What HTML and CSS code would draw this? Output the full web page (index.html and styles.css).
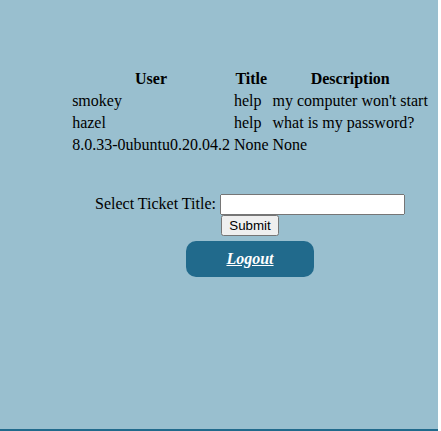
FILE: index.html
```html
<!DOCTYPE html>
<html>
<head>
<meta charset="utf-8">
<link rel="stylesheet" href="styles.css">
</head>
<body>
<div class="page">
  <div class="main">
    <table class="tickets">
      <tr><th>User</th><th>Title</th><th>Description</th></tr>
      <tr><td>smokey</td><td>help</td><td>my computer won't start</td></tr>
      <tr><td>hazel</td><td>help</td><td>what is my password?</td></tr>
      <tr><td>8.0.33-0ubuntu0.20.04.2</td><td>None</td><td>None</td></tr>
    </table>
    <form class="ticket-form">
      <label>Select Ticket Title:</label> <input type="text" class="field"><br>
      <input type="submit" value="Submit" class="submit">
    </form>
    <a href="#" class="logout">Logout</a>
  </div>
</div>
</body>
</html>
```
FILE: styles.css
```css
html, body {
  margin: 0;
  padding: 0;
  background: #ffffff;
}
.page {
  width: 438px;
  height: 429px;
  background: #99bfcf;
  border-bottom: 2px solid #216a8c;
  font-family: "Liberation Serif", serif;
  font-size: 16px;
  color: #000;
  overflow: hidden;
}
.main {
  margin-left: 62px;
  width: 376px;
  padding-top: 67px;
  text-align: center;
}
.tickets {
  margin: 0 auto;
  text-align: left;
}
.tickets th {
  text-align: center;
}
.ticket-form {
  margin-top: 37px;
}
.field {
  width: 177px;
  height: 15px;
}
.submit {
  margin-top: 0;
}
.logout {
  display: inline-block;
  margin-top: 5px;
  width: 128px;
  height: 36px;
  line-height: 36px;
  border-radius: 10px;
  background: #216a8c;
  color: #ffffff;
  font-weight: bold;
  font-style: italic;
  text-decoration: underline;
}
```
